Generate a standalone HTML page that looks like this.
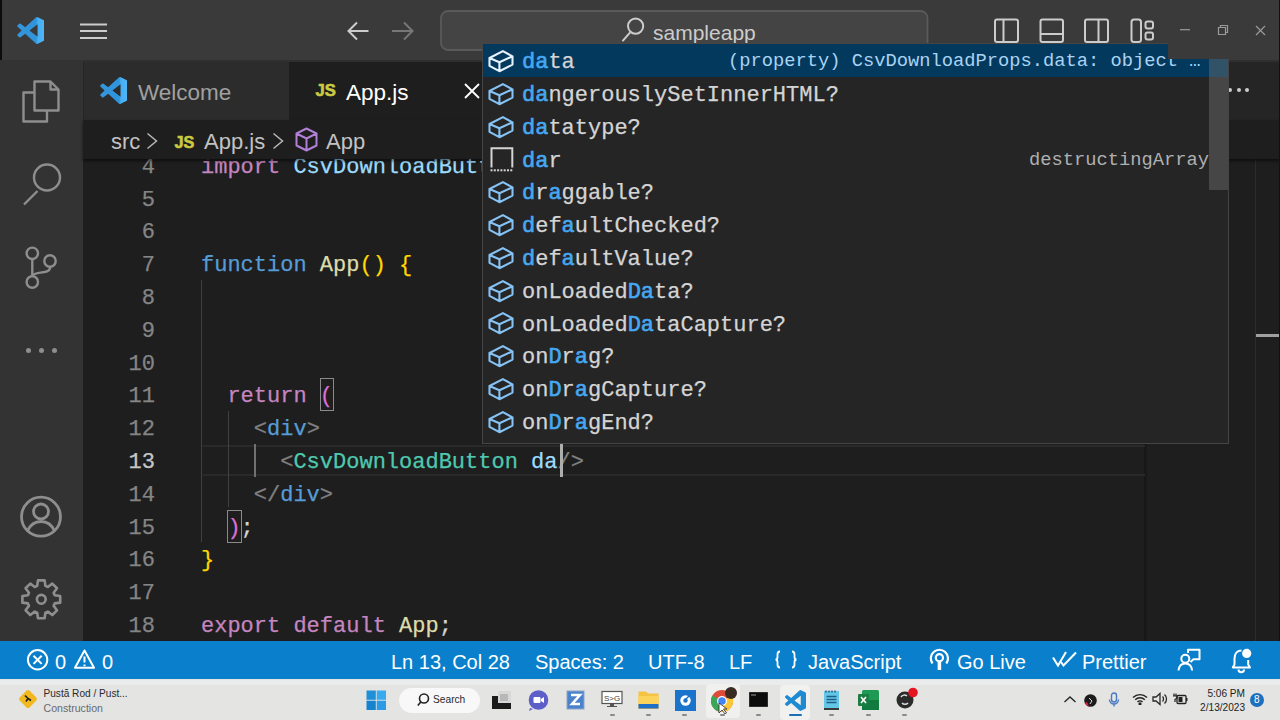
<!DOCTYPE html>
<html><head><meta charset="utf-8">
<style>
*{margin:0;padding:0;box-sizing:border-box}
html,body{width:1280px;height:720px;overflow:hidden;background:#1e1e1e;font-family:"Liberation Sans",sans-serif}
.abs{position:absolute}
#title{left:0;top:0;width:1280px;height:60px;background:#3a3a3a}
#act{left:0;top:60px;width:83px;height:581px;background:#333333}
#tabs{left:83px;top:60px;width:1197px;height:60px;background:#252526}
#tabW{left:84px;top:62px;width:205px;height:58px;background:#2c2c2c}
#tabA{left:289px;top:62px;width:211px;height:58px;background:#1e1e1e}
#crumb{left:83px;top:120px;width:1197px;height:39px;background:#1e1e1e;box-shadow:0 2px 3px rgba(0,0,0,.55)}
#status{left:0;top:641px;width:1280px;height:38.7px;background:#0a80cc;color:#fff}
#task{left:0;top:679px;width:1280px;height:41px;background:#e4e4e2}
.mono{font-family:"Liberation Mono",monospace;font-size:22px;white-space:pre;-webkit-text-stroke:0.25px currentColor}
.ln{position:absolute;left:83px;width:72px;text-align:right;color:#858585;height:33px;line-height:33px}
.ln.act{color:#c6c6c6}
.code{position:absolute;left:201px;color:#d4d4d4;height:33px;line-height:33px}
.ui{position:absolute;font-family:"Liberation Sans",sans-serif;white-space:pre}
#sug{left:482px;top:43px;width:747px;height:401px;background:#252526;border:1px solid #454545}
.row{position:absolute;left:483px;width:745px;height:33px;line-height:33px}
.row.sel{background:#04395e}
.row .t{position:absolute;left:39px;top:2.3px;color:#d4d4d4;line-height:33px}
.hl{color:#45a8f2;font-weight:normal;-webkit-text-stroke:0.6px #45a8f2}
.row svg{position:absolute;left:1px;top:0}
.st{top:643px;line-height:38px;font-size:20px;color:#ffffff}
.tind{top:713.5px;width:5px;height:2.5px;border-radius:2px;background:#8a8a8a}
.det{position:absolute;font-family:"Liberation Mono",monospace;font-size:18.75px;color:#b0b0b0;white-space:pre;line-height:33px}
</style></head><body>
<svg width="0" height="0" style="position:absolute"><defs><linearGradient id="vsg" x1="0" y1="0" x2="1" y2="0"><stop offset="0" stop-color="#3596dc"/><stop offset="0.7" stop-color="#2f94dc"/><stop offset="0.76" stop-color="#45aef2"/><stop offset="1" stop-color="#50b6f8"/></linearGradient></defs></svg>
<div id="title" class="abs"></div>
<div class="abs" style="left:0;top:0;width:1.5px;height:720px;background:#0c0c0c"></div>

<svg class="abs" style="left:0;top:0" width="1280" height="60" fill="none" stroke="#cccccc" stroke-width="2">
 <path d="M80 24.5H107M80 31H107M80 38H107" stroke-width="2"/>
 <path d="M368.5 31H348.5M357 22.5L348.5 31L357 39.5" stroke-width="2"/>
 <path d="M392 31H412.5M404 22.5L412.5 31L404 39.5" stroke="#777777" stroke-width="2"/>
 <rect x="441" y="11" width="486.5" height="39" rx="7" fill="#444444" stroke="#5a5a5a" stroke-width="1.8"/>
 <circle cx="635.6" cy="26.1" r="7.6" stroke-width="2"/>
 <path d="M622.5 41.1L630.2 32.4" stroke-width="2"/>
 <rect x="995" y="19.5" width="23" height="22.5" rx="2"/>
 <path d="M1003.5 19.5V42"/>
 <rect x="1040.5" y="19.5" width="22.5" height="22.5" rx="2"/>
 <path d="M1040.5 34H1063"/>
 <rect x="1085" y="19.5" width="23" height="22.5" rx="2"/>
 <path d="M1098.5 19.5V42"/>
 <rect x="1131.5" y="19.5" width="9.5" height="22.5" rx="2.5"/>
 <rect x="1145.5" y="21.5" width="7.5" height="7" rx="2"/>
 <rect x="1145.5" y="32.5" width="7.5" height="7" rx="2"/>
</svg>
<div class="ui" style="left:653px;top:15.5px;line-height:34px;font-size:21px;color:#cccccc">sampleapp</div>

<div id="act" class="abs"></div>

<svg class="abs" style="left:0;top:60px" width="83" height="581" viewBox="0 60 83 581" fill="none" stroke="#8e8e8e" stroke-width="2.4" stroke-linejoin="round">
 <path d="M34 92.5H23.5V121.5H47V111"/>
 <path d="M34.5 81.5H50.5L58.5 89.5V110.5H34.5Z M50.5 81.5V89.5H58.5"/>
 <circle cx="47" cy="177.5" r="13"/>
 <path d="M24 204.5L37.5 191"/>
 <circle cx="32.3" cy="253.3" r="5.7"/>
 <circle cx="50" cy="261" r="5.7"/>
 <circle cx="32.3" cy="282" r="5.7"/>
 <path d="M32.3 259V276.3 M50.2 266.8C50.2 271.3 46.5 271.8 40.5 272.6C35.5 273.3 32.3 274.8 32.3 276.8"/>
 <circle cx="41" cy="516.7" r="19.5" stroke-width="2.8"/>
 <circle cx="41" cy="511.5" r="7.5" stroke-width="2.8"/>
 <path d="M27.5 531C31 523 36 521.5 41 521.5C46 521.5 51 523 54.5 531" stroke-width="2.8"/>
 <g transform="translate(41.3 599.3)">
  <path d="M-4.09 -13.39 L-3.33 -18.91 L3.33 -18.91 L4.09 -13.39 L6.57 -12.36 L11.01 -15.73 L15.73 -11.01 L12.36 -6.57 L13.39 -4.09 L18.91 -3.33 L18.91 3.33 L13.39 4.09 L12.36 6.57 L15.73 11.01 L11.01 15.73 L6.57 12.36 L4.09 13.39 L3.33 18.91 L-3.33 18.91 L-4.09 13.39 L-6.57 12.36 L-11.01 15.73 L-15.73 11.01 L-12.36 6.57 L-13.39 4.09 L-18.91 3.33 L-18.91 -3.33 L-13.39 -4.09 L-12.36 -6.57 L-15.73 -11.01 L-11.01 -15.73 L-6.57 -12.36 Z" stroke-width="2.6"/>
  <circle cx="0" cy="0" r="4.4" stroke-width="2.6"/>
 </g>
</svg>
<div class="abs" style="left:25.5px;top:347.9px;width:5px;height:5px;border-radius:50%;background:#8e8e8e"></div>
<div class="abs" style="left:38.5px;top:347.9px;width:5px;height:5px;border-radius:50%;background:#8e8e8e"></div>
<div class="abs" style="left:51.5px;top:347.9px;width:5px;height:5px;border-radius:50%;background:#8e8e8e"></div>

<div id="tabs" class="abs"></div>
<div class="abs" style="left:83px;top:60px;width:1197px;height:2px;background:#2f2f2f"></div>
<div id="tabW" class="abs"></div>
<div id="tabA" class="abs"></div>
<!-- editor -->
<div class="abs" style="left:1145px;top:159px;width:135px;height:482px;background:#1e1e1e"></div>
<div class="abs" style="left:1144px;top:159px;width:3px;height:482px;background:linear-gradient(90deg,#161616,#1a1a1a)"></div>
<div class="abs" style="left:1255px;top:159px;width:1px;height:482px;background:#2c2c2c"></div>
<div class="abs" style="left:1256px;top:334px;width:24px;height:3px;background:#a0a0a0"></div>
<div class="abs" style="left:203px;top:445px;width:942px;height:30.7px;border-top:2px solid #2a2a2a;border-bottom:2px solid #2a2a2a"></div>
<div class="abs" style="left:201px;top:280px;width:1px;height:262px;background:#404040"></div>
<div class="abs" style="left:227.5px;top:411px;width:1px;height:96px;background:#404040"></div>
<div class="abs" style="left:254px;top:444px;width:2px;height:32.5px;background:#707070"></div>
<div class="abs" style="left:319.8px;top:378px;width:14.4px;height:33.4px;border:1.3px solid #8a8a8a"></div>
<div class="abs" style="left:227.3px;top:509.8px;width:14.4px;height:33.4px;border:1.3px solid #8a8a8a"></div>
<div class="mono ln" style="top:150.7px">4</div>
<div class="mono code" style="top:150.7px"><span style="color:#c586c0">import</span> <span style="color:#9cdcfe">CsvDownloadButton</span> <span style="color:#c586c0">from</span> <span style="color:#ce9178">'react-csv-downloader'</span>;</div>
<div class="mono ln" style="top:183.5px">5</div>
<div class="mono ln" style="top:216.3px">6</div>
<div class="mono ln" style="top:249.1px">7</div>
<div class="mono code" style="top:249.1px"><span style="color:#569cd6">function</span> <span style="color:#dcdcaa">App</span><span style="color:#ffd700">()</span> <span style="color:#ffd700">{</span></div>
<div class="mono ln" style="top:281.9px">8</div>
<div class="mono ln" style="top:314.7px">9</div>
<div class="mono ln" style="top:347.5px">10</div>
<div class="mono ln" style="top:380.3px">11</div>
<div class="mono code" style="top:380.3px">  <span style="color:#c586c0">return</span> <span style="color:#da70d6">(</span></div>
<div class="mono ln" style="top:413.1px">12</div>
<div class="mono code" style="top:413.1px">    <span style="color:#808080">&lt;</span><span style="color:#569cd6">div</span><span style="color:#808080">&gt;</span></div>
<div class="mono ln act" style="top:445.9px">13</div>
<div class="mono code" style="top:445.9px">      <span style="color:#808080">&lt;</span><span style="color:#4ec9b0">CsvDownloadButton</span> <span style="color:#9cdcfe">da</span><span style="color:#808080">/&gt;</span></div>
<div class="mono ln" style="top:478.7px">14</div>
<div class="mono code" style="top:478.7px">    <span style="color:#808080">&lt;/</span><span style="color:#569cd6">div</span><span style="color:#808080">&gt;</span></div>
<div class="mono ln" style="top:511.5px">15</div>
<div class="mono code" style="top:511.5px">  <span style="color:#da70d6">)</span>;</div>
<div class="mono ln" style="top:544.3px">16</div>
<div class="mono code" style="top:544.3px"><span style="color:#ffd700">}</span></div>
<div class="mono ln" style="top:577.1px">17</div>
<div class="mono ln" style="top:609.9px">18</div>
<div class="mono code" style="top:609.9px"><span style="color:#c586c0">export</span> <span style="color:#c586c0">default</span> <span style="color:#dcdcaa">App</span>;</div>
<div class="abs" style="left:560px;top:444px;width:3px;height:32.6px;background:#aeafad"></div>
<div id="crumb" class="abs"></div>
<div class="ui" style="left:111px;top:122px;line-height:39px;font-size:22px;color:#c2c2c2">src</div>
<svg class="abs" style="left:146px;top:132px" width="14" height="18" fill="none" stroke="#b8b8b8" stroke-width="1.5"><path d="M1.5 1.5L10.5 9L1.5 16.5"/></svg>
<div class="ui" style="left:174.5px;top:133.5px;line-height:16px;font-size:16.2px;font-weight:bold;color:#cbcb41;-webkit-text-stroke:0.6px #cbcb41">JS</div>
<div class="ui" style="left:204px;top:122px;line-height:39px;font-size:22px;color:#c2c2c2">App.js</div>
<svg class="abs" style="left:272px;top:132px" width="14" height="18" fill="none" stroke="#b8b8b8" stroke-width="1.5"><path d="M1.5 1.5L10.5 9L1.5 16.5"/></svg>
<svg class="abs" style="left:294px;top:126px" width="26" height="27" fill="none" stroke="#b180d7" stroke-width="2" stroke-linejoin="round"><path d="M12.5 2.5L22.5 7.5V19.5L12.5 24.5L2.5 19.5V7.5Z M2.5 7.5L12.5 12.5L22.5 7.5 M12.5 12.5V24.5"/></svg>
<div class="ui" style="left:326px;top:122px;line-height:39px;font-size:22px;color:#c2c2c2">App</div>
<svg class="abs" style="left:99.8px;top:76.7px" width="27.5" height="27" viewBox="0 0 24 24" fill="url(#vsg)"><path d="M23.15 2.587L18.21.21a1.494 1.494 0 0 0-1.705.29l-9.46 8.63-4.12-3.128a.999.999 0 0 0-1.276.057L.327 7.261A1 1 0 0 0 .326 8.74L3.899 12 .326 15.26a1 1 0 0 0 .001 1.479L1.65 17.94a.999.999 0 0 0 1.276.057l4.12-3.128 9.46 8.63a1.492 1.492 0 0 0 1.704.29l4.942-2.377A1.5 1.5 0 0 0 24 20.06V3.939a1.5 1.5 0 0 0-.85-1.352zm-5.146 14.861L10.826 12l7.178-5.448v10.896z"/></svg>
<div class="ui" style="left:138px;top:64px;line-height:58px;font-size:22.5px;color:#a0a0a0">Welcome</div>
<div class="ui" style="left:315.5px;top:83.3px;line-height:16px;font-size:16.6px;font-weight:bold;color:#cbcb41;-webkit-text-stroke:0.6px #cbcb41">JS</div>
<div class="ui" style="left:346px;top:64px;line-height:58px;font-size:22.5px;color:#ffffff">App.js</div>
<svg class="abs" style="left:462px;top:81px" width="20" height="20" fill="none" stroke="#ffffff" stroke-width="1.8"><path d="M3 3L17 17M17 3L3 17"/></svg>
<div class="abs" style="left:1228.2px;top:88.4px;width:4px;height:4px;background:#cccccc;border-radius:50%"></div>
<div class="abs" style="left:1236.9px;top:88.4px;width:4px;height:4px;background:#cccccc;border-radius:50%"></div>
<div class="abs" style="left:1245.4px;top:88.4px;width:4px;height:4px;background:#cccccc;border-radius:50%"></div>
<svg class="abs" style="left:16.6px;top:16.8px" width="27.6" height="27" viewBox="0 0 24 24" fill="url(#vsg)"><path d="M23.15 2.587L18.21.21a1.494 1.494 0 0 0-1.705.29l-9.46 8.63-4.12-3.128a.999.999 0 0 0-1.276.057L.327 7.261A1 1 0 0 0 .326 8.74L3.899 12 .326 15.26a1 1 0 0 0 .001 1.479L1.65 17.94a.999.999 0 0 0 1.276.057l4.12-3.128 9.46 8.63a1.492 1.492 0 0 0 1.704.29l4.942-2.377A1.5 1.5 0 0 0 24 20.06V3.939a1.5 1.5 0 0 0-.85-1.352zm-5.146 14.861L10.826 12l7.178-5.448v10.896z"/></svg>
<!-- suggest -->
<div id="sug" class="abs"></div>
<div class="row sel" style="top:44.0px"><svg width="34" height="33" viewBox="0 0 34 33"><path d="M18.9 7.1 L5.5 14 L15.4 18.2 L28.5 12.3 Z M5.5 14 L5.5 21.8 L15.4 27.2 L28.5 20.6 L28.5 12.3 M15.4 18.2 L15.4 27.2" fill="none" stroke="#e6f3ff" stroke-width="2.1" stroke-linejoin="round"/></svg><span class="mono t"><b class="hl">da</b>ta</span></div>
<div class="row" style="top:76.8px"><svg width="34" height="33" viewBox="0 0 34 33"><path d="M18.9 7.1 L5.5 14 L15.4 18.2 L28.5 12.3 Z M5.5 14 L5.5 21.8 L15.4 27.2 L28.5 20.6 L28.5 12.3 M15.4 18.2 L15.4 27.2" fill="none" stroke="#86c3f4" stroke-width="2.1" stroke-linejoin="round"/></svg><span class="mono t"><b class="hl">da</b>ngerouslySetInnerHTML?</span></div>
<div class="row" style="top:109.6px"><svg width="34" height="33" viewBox="0 0 34 33"><path d="M18.9 7.1 L5.5 14 L15.4 18.2 L28.5 12.3 Z M5.5 14 L5.5 21.8 L15.4 27.2 L28.5 20.6 L28.5 12.3 M15.4 18.2 L15.4 27.2" fill="none" stroke="#86c3f4" stroke-width="2.1" stroke-linejoin="round"/></svg><span class="mono t"><b class="hl">da</b>tatype?</span></div>
<div class="row" style="top:142.4px"><svg width="34" height="33" viewBox="0 0 34 33"><path d="M7.5 25.6 V6.2 H28.3 V25.6" fill="none" stroke="#d4d4d4" stroke-width="2"/><g fill="#d4d4d4"><rect x="6.5" y="27.3" width="2" height="2"/><rect x="9.8" y="27.3" width="2" height="2"/><rect x="13.1" y="27.3" width="2" height="2"/><rect x="16.4" y="27.3" width="2" height="2"/><rect x="19.7" y="27.3" width="2" height="2"/><rect x="23.0" y="27.3" width="2" height="2"/><rect x="26.3" y="27.3" width="2" height="2"/></g></svg><span class="mono t"><b class="hl">da</b>r</span></div>
<div class="row" style="top:175.2px"><svg width="34" height="33" viewBox="0 0 34 33"><path d="M18.9 7.1 L5.5 14 L15.4 18.2 L28.5 12.3 Z M5.5 14 L5.5 21.8 L15.4 27.2 L28.5 20.6 L28.5 12.3 M15.4 18.2 L15.4 27.2" fill="none" stroke="#86c3f4" stroke-width="2.1" stroke-linejoin="round"/></svg><span class="mono t"><b class="hl">d</b>r<b class="hl">a</b>ggable?</span></div>
<div class="row" style="top:208.0px"><svg width="34" height="33" viewBox="0 0 34 33"><path d="M18.9 7.1 L5.5 14 L15.4 18.2 L28.5 12.3 Z M5.5 14 L5.5 21.8 L15.4 27.2 L28.5 20.6 L28.5 12.3 M15.4 18.2 L15.4 27.2" fill="none" stroke="#86c3f4" stroke-width="2.1" stroke-linejoin="round"/></svg><span class="mono t"><b class="hl">d</b>ef<b class="hl">a</b>ultChecked?</span></div>
<div class="row" style="top:240.8px"><svg width="34" height="33" viewBox="0 0 34 33"><path d="M18.9 7.1 L5.5 14 L15.4 18.2 L28.5 12.3 Z M5.5 14 L5.5 21.8 L15.4 27.2 L28.5 20.6 L28.5 12.3 M15.4 18.2 L15.4 27.2" fill="none" stroke="#86c3f4" stroke-width="2.1" stroke-linejoin="round"/></svg><span class="mono t"><b class="hl">d</b>ef<b class="hl">a</b>ultValue?</span></div>
<div class="row" style="top:273.6px"><svg width="34" height="33" viewBox="0 0 34 33"><path d="M18.9 7.1 L5.5 14 L15.4 18.2 L28.5 12.3 Z M5.5 14 L5.5 21.8 L15.4 27.2 L28.5 20.6 L28.5 12.3 M15.4 18.2 L15.4 27.2" fill="none" stroke="#86c3f4" stroke-width="2.1" stroke-linejoin="round"/></svg><span class="mono t">onLoaded<b class="hl">Da</b>ta?</span></div>
<div class="row" style="top:306.4px"><svg width="34" height="33" viewBox="0 0 34 33"><path d="M18.9 7.1 L5.5 14 L15.4 18.2 L28.5 12.3 Z M5.5 14 L5.5 21.8 L15.4 27.2 L28.5 20.6 L28.5 12.3 M15.4 18.2 L15.4 27.2" fill="none" stroke="#86c3f4" stroke-width="2.1" stroke-linejoin="round"/></svg><span class="mono t">onLoaded<b class="hl">Da</b>taCapture?</span></div>
<div class="row" style="top:339.2px"><svg width="34" height="33" viewBox="0 0 34 33"><path d="M18.9 7.1 L5.5 14 L15.4 18.2 L28.5 12.3 Z M5.5 14 L5.5 21.8 L15.4 27.2 L28.5 20.6 L28.5 12.3 M15.4 18.2 L15.4 27.2" fill="none" stroke="#86c3f4" stroke-width="2.1" stroke-linejoin="round"/></svg><span class="mono t">on<b class="hl">D</b>r<b class="hl">a</b>g?</span></div>
<div class="row" style="top:372.0px"><svg width="34" height="33" viewBox="0 0 34 33"><path d="M18.9 7.1 L5.5 14 L15.4 18.2 L28.5 12.3 Z M5.5 14 L5.5 21.8 L15.4 27.2 L28.5 20.6 L28.5 12.3 M15.4 18.2 L15.4 27.2" fill="none" stroke="#86c3f4" stroke-width="2.1" stroke-linejoin="round"/></svg><span class="mono t">on<b class="hl">D</b>r<b class="hl">a</b>gCapture?</span></div>
<div class="row" style="top:404.8px"><svg width="34" height="33" viewBox="0 0 34 33"><path d="M18.9 7.1 L5.5 14 L15.4 18.2 L28.5 12.3 Z M5.5 14 L5.5 21.8 L15.4 27.2 L28.5 20.6 L28.5 12.3 M15.4 18.2 L15.4 27.2" fill="none" stroke="#86c3f4" stroke-width="2.1" stroke-linejoin="round"/></svg><span class="mono t">on<b class="hl">D</b>r<b class="hl">a</b>gEnd?</span></div>
<div class="det" style="left:728px;top:45px;color:#a9d3f2">(property) CsvDownloadProps.data: object …</div>
<div class="det" style="left:1029px;top:144.2px">destructingArray</div>
<div class="abs" style="left:1209px;top:44px;width:19px;height:146px;background:rgba(121,121,121,0.4)"></div>
<div class="abs" style="left:1168px;top:0;width:112px;height:59px;background:#3a3a3a"></div>
<svg class="abs" style="left:1168px;top:0" width="112" height="58" viewBox="1168 0 112 58" fill="none">
 <path d="M1180 29.7H1190" stroke="#9a9a9a" stroke-width="1.2"/>
 <path d="M1218.5 27.5h7v7h-7z M1220.5 27.5v-2h7v7h-2" stroke="#9a9a9a" stroke-width="1.2"/>
 <path d="M1256 26L1265 35M1265 26L1256 35" stroke="#9a9a9a" stroke-width="1.2"/>
</svg>
<div class="abs" style="left:1278.5px;top:0;width:1.5px;height:679px;background:#111"></div>

<div id="status" class="abs"></div>
<svg class="abs" style="left:0;top:641px" width="1280" height="38" viewBox="0 641 1280 38" fill="none" stroke="#ffffff" stroke-width="2">
 <circle cx="37.6" cy="659.8" r="9.7"/>
 <path d="M33.5 655.7L41.7 663.9M41.7 655.7L33.5 663.9"/>
 <path d="M84.5 650.5L94 667.8H75Z" stroke-linejoin="round"/>
 <path d="M84.5 656.5V662.5M84.5 664.5V666.3"/>
 <path d="M780 651.5c-2 0-2.5 1-2.5 3v2.5c0 1.5-.8 2.5-2 2.5c1.2 0 2 1 2 2.5v2.5c0 2 .5 3 2.5 3" stroke-width="1.8"/>
 <path d="M792 651.5c2 0 2.5 1 2.5 3v2.5c0 1.5.8 2.5 2 2.5c-1.2 0-2 1-2 2.5v2.5c0 2-.5 3-2.5 3" stroke-width="1.8"/>
 <path d="M932.5 663.5A8.6 8.6 0 1 1 946.3 663.5" stroke-width="2.2"/>
 <circle cx="939.4" cy="657.8" r="3.6" stroke-width="2.2"/>
 <path d="M939.4 662V670" stroke-width="3.5"/>
 <path d="M1053 657.5L1058 665.5L1066 652M1061 662L1063.5 665.5L1076 652.5" stroke-width="2"/>
 <path d="M1188 653V649.8H1199.5V659.3H1193.5L1190.5 662" stroke-width="2" stroke-linejoin="round"/>
 <circle cx="1185.3" cy="658.8" r="4" stroke-width="2"/>
 <path d="M1178.5 670.5C1179 665.5 1182 663.5 1185.3 663.5C1188.6 663.5 1191.6 665.5 1192.1 670.5" stroke-width="2"/>
 <path d="M1241.5 650.5C1236.5 650.5 1234.5 654.5 1234.5 658.5V664.5L1232.8 667.5H1250L1248.2 664.5V660" stroke-width="2" stroke-linejoin="round"/>
 <path d="M1238.5 669.5A2.5 2.5 0 0 0 1244 669.5" stroke-width="2"/>
 <circle cx="1246.7" cy="653.4" r="4.6" fill="#ffffff" stroke="none"/>
</svg>
<div class="ui st" style="left:55px">0</div>
<div class="ui st" style="left:102px">0</div>
<div class="ui st" style="left:391px">Ln 13, Col 28</div>
<div class="ui st" style="left:535px">Spaces: 2</div>
<div class="ui st" style="left:648px">UTF-8</div>
<div class="ui st" style="left:729px">LF</div>
<div class="ui st" style="left:808px">JavaScript</div>
<div class="ui st" style="left:957px">Go Live</div>
<div class="ui st" style="left:1082px">Prettier</div>


<div id="task" class="abs"></div>
<div class="abs" style="left:0;top:679.7px;width:1280px;height:5px;background:#e9ebec"></div>
<svg class="abs" style="left:17px;top:688px" width="22" height="22" viewBox="0 0 22 22"><rect x="4" y="4" width="14" height="14" rx="2.5" transform="rotate(45 11 11)" fill="#f2b81f"/><path d="M8 7.5l3 3l-2 3M11 10.5l3 2" stroke="#222" stroke-width="1.6" fill="none"/></svg>
<div class="ui" style="left:43.5px;top:686.5px;font-size:10.1px;line-height:14px;color:#2a2a2a">Pustă Rod / Pust...</div>
<div class="ui" style="left:43.5px;top:700.5px;font-size:10.6px;line-height:14px;color:#6a6a6a">Construction</div>
<svg class="abs" style="left:366px;top:690px" width="21" height="21" viewBox="0 0 21 21"><rect x="0.5" y="0.5" width="9.3" height="9.3" fill="#1f8fd8"/><rect x="10.7" y="0.5" width="9.3" height="9.3" fill="#3aaaf0"/><rect x="0.5" y="10.7" width="9.3" height="9.3" fill="#1683cf"/><rect x="10.7" y="10.7" width="9.3" height="9.3" fill="#2a9be4"/></svg>
<div class="abs" style="left:398.5px;top:687.5px;width:81.5px;height:25px;border-radius:13px;background:#f8f8f8"></div>
<svg class="abs" style="left:416px;top:692px" width="14" height="16" viewBox="0 0 14 16" fill="none" stroke="#222" stroke-width="1.6"><circle cx="8" cy="6.5" r="4.5"/><path d="M1.8 13.5L4.8 10"/></svg>
<div class="ui" style="left:433px;top:692px;font-size:10.2px;line-height:15px;color:#2a2a2a">Search</div>
<svg class="abs" style="left:491px;top:690px" width="21" height="20" viewBox="0 0 21 20"><rect x="7" y="1" width="13" height="12" fill="#d8d8d8"/><rect x="9" y="4" width="8" height="7" fill="#b8b8b8"/><path d="M1 6H7V13H20V19H1Z" fill="#1c1c1c"/></svg>
<svg class="abs" style="left:528px;top:690px" width="21" height="21" viewBox="0 0 21 21"><circle cx="10.5" cy="10" r="9.8" fill="#5b5fc7"/><path d="M2 18L1 21L5 19Z" fill="#5b5fc7"/><rect x="5.5" y="7" width="7" height="6" rx="1" fill="#fff"/><path d="M13 9L16 7V13L13 11Z" fill="#fff"/></svg>
<svg class="abs" style="left:566px;top:690px" width="19" height="20" viewBox="0 0 19 20"><rect x="1" y="1" width="17" height="18" fill="#4a82cc" stroke="#8aa6c8" stroke-width="1"/><path d="M5 5H14L6 14H14" stroke="#fff" stroke-width="2.5" fill="none"/></svg>
<svg class="abs" style="left:601px;top:690px" width="22" height="18" viewBox="0 0 22 18"><rect x="1" y="1.5" width="20" height="12" fill="#fff" stroke="#555" stroke-width="1.2"/><path d="M9 14V16H6V17H16V16H13V14" fill="#555"/><text x="11" y="11" font-family="Liberation Sans" font-size="8" text-anchor="middle" fill="#444">S&gt;G</text></svg>
<svg class="abs" style="left:638px;top:690px" width="21" height="20" viewBox="0 0 21 20"><path d="M0.5 1.5H8L10 3.5H20.5V19H0.5Z" fill="#f5c242"/><rect x="0.5" y="6" width="20" height="9" fill="#fbd35a"/><rect x="0.5" y="14" width="20" height="4.5" fill="#1e6fc8"/></svg>
<svg class="abs" style="left:675px;top:689.5px" width="21" height="21" viewBox="0 0 21 21"><rect x="0" y="0" width="21" height="21" fill="#1b74cc"/><circle cx="10.5" cy="10.5" r="5.2" fill="#fff"/><circle cx="10.5" cy="10.5" r="2.2" fill="#1b74cc"/><path d="M10 10L14 6" stroke="#1b74cc" stroke-width="1.5"/></svg>
<div class="abs" style="left:706px;top:684px;width:34px;height:34px;border-radius:4px;background:#f0f0ee"></div>
<svg class="abs" style="left:710px;top:686px" width="28" height="28" viewBox="0 0 28 28"><circle cx="12" cy="15" r="11" fill="#dd4b39"/><path d="M12 15L2.5 9.5A11 11 0 0 0 9 25.6Z" fill="#3aa757"/><path d="M12 15L21.5 9.5A11 11 0 0 1 9 25.6Z" fill="#fcc934"/><circle cx="12" cy="15" r="5" fill="#fff"/><circle cx="12" cy="15" r="3.8" fill="#4285f4"/><circle cx="21" cy="7" r="6" fill="#3a2c22"/><path d="M9 17L9 27L12 24L15 28L16.5 27L13.5 23H17Z" fill="#fff" stroke="#222" stroke-width="0.8"/></svg>
<svg class="abs" style="left:749px;top:692px" width="19" height="15" viewBox="0 0 19 15"><rect x="0" y="0" width="19" height="15" fill="#0c0c0c" stroke="#777" stroke-width="0.6"/><path d="M2 3H7" stroke="#999" stroke-width="1"/></svg>
<div class="abs" style="left:780px;top:684.5px;width:30px;height:35px;border-radius:4px;background:#f1f1ef"></div>
<svg class="abs" style="left:785px;top:690px" width="21" height="21" viewBox="0 0 24 24" fill="#1f8ad2"><path d="M23.15 2.587L18.21.21a1.494 1.494 0 0 0-1.705.29l-9.46 8.63-4.12-3.128a.999.999 0 0 0-1.276.057L.327 7.261A1 1 0 0 0 .326 8.74L3.899 12 .326 15.26a1 1 0 0 0 .001 1.479L1.65 17.94a.999.999 0 0 0 1.276.057l4.12-3.128 9.46 8.63a1.492 1.492 0 0 0 1.704.29l4.942-2.377A1.5 1.5 0 0 0 24 20.06V3.939a1.5 1.5 0 0 0-.85-1.352zm-5.146 14.861L10.826 12l7.178-5.448v10.896z"/></svg>
<div class="abs" style="left:789px;top:713.5px;width:12.5px;height:2.8px;border-radius:2px;background:#1c6fb5"></div>
<svg class="abs" style="left:823px;top:689px" width="17" height="22" viewBox="0 0 17 22"><rect x="1" y="2" width="15" height="17" fill="#63c8e8"/><path d="M3 1.5V3.5M6 1.5V3.5M9 1.5V3.5M12 1.5V3.5" stroke="#1c4b6a" stroke-width="1.2"/><path d="M3.5 7.5H13.5M3.5 10.5H13.5M3.5 13.5H13.5" stroke="#1f5d86" stroke-width="1.3"/><rect x="1" y="19" width="15" height="2" fill="#3a3a3a"/></svg>
<svg class="abs" style="left:858px;top:690px" width="21" height="20" viewBox="0 0 21 20"><rect x="4" y="0" width="17" height="20" rx="1.5" fill="#1e9a54"/><rect x="4" y="10" width="17" height="10" fill="#117a3e"/><rect x="0" y="4" width="11" height="12" rx="1" fill="#1a7d43"/><path d="M3 7L8 13M8 7L3 13" stroke="#fff" stroke-width="1.6"/></svg>
<svg class="abs" style="left:895px;top:686px" width="24" height="24" viewBox="0 0 24 24"><circle cx="10" cy="14" r="8.5" fill="#2b2b2b"/><path d="M6 11a4 4 0 0 1 6 -1M13 17a4 4 0 0 1 -6 0" stroke="#ddd" stroke-width="1.5" fill="none"/><circle cx="18" cy="6.5" r="4.8" fill="#e5151f"/></svg>
<div class="abs tind" style="left:609.5px"></div>
<div class="abs tind" style="left:646px"></div>
<div class="abs tind" style="left:682px"></div>
<div class="abs tind" style="left:720px"></div>
<div class="abs tind" style="left:756px"></div>
<div class="abs tind" style="left:829px"></div>
<div class="abs tind" style="left:866px"></div>
<div class="abs tind" style="left:902px"></div>
<svg class="abs" style="left:1062px;top:694px" width="16" height="10" viewBox="0 0 16 10" fill="none" stroke="#2a2a2a" stroke-width="1.4"><path d="M2.5 8L8 3L13.5 8"/></svg>
<svg class="abs" style="left:1083px;top:693px" width="15" height="15" viewBox="0 0 15 15"><circle cx="7.5" cy="7.5" r="6.3" fill="#1c1c1c"/><path d="M2 10a6 6 0 0 0 4 3.5L4 9Z" fill="#e0203c"/><path d="M6 5L9 8L7 11" stroke="#ddd" stroke-width="1" fill="none"/></svg>
<svg class="abs" style="left:1108px;top:692px" width="12" height="16" viewBox="0 0 12 16" fill="none" stroke="#4a79c4" stroke-width="1.4"><rect x="3.5" y="1" width="5" height="9" rx="2.5"/><path d="M1.5 7.5a4.5 4.5 0 0 0 9 0M6 12V14.5"/></svg>
<svg class="abs" style="left:1132px;top:693px" width="16" height="12" viewBox="0 0 16 12" fill="none" stroke="#222" stroke-width="1.4"><path d="M1 4.5a10 10 0 0 1 14 0M3.2 6.8a6.6 6.6 0 0 1 9.6 0M5.5 9a3.3 3.3 0 0 1 5 0"/><circle cx="8" cy="10.8" r="0.9" fill="#222"/></svg>
<svg class="abs" style="left:1152px;top:692px" width="16" height="14" viewBox="0 0 16 14" fill="none" stroke="#2a2a2a" stroke-width="1.3"><path d="M1 5H4L8 1.5V12.5L4 9H1Z"/><path d="M10.5 4.5a3.5 3.5 0 0 1 0 5M12.5 2.5a6 6 0 0 1 0 9"/></svg>
<svg class="abs" style="left:1172px;top:693px" width="16" height="12" viewBox="0 0 16 12"><rect x="5" y="2.5" width="9" height="8" rx="1" fill="none" stroke="#222" stroke-width="1.3"/><rect x="14" y="5" width="1.5" height="3" fill="#222"/><rect x="6.5" y="4" width="4" height="5" fill="#222"/><path d="M2 0.5V3M4 0.5V3M1 3H5V5L3 6.5V9" stroke="#222" stroke-width="1.2" fill="none"/></svg>
<div class="ui" style="left:1161px;top:687px;width:84px;text-align:right;font-size:10.1px;line-height:14px;color:#1e1e1e">5:06 PM</div>
<div class="ui" style="left:1161px;top:700.5px;width:84px;text-align:right;font-size:10.1px;line-height:14px;color:#1e1e1e">2/13/2023</div>
<div class="abs" style="left:1249.7px;top:692.8px;width:14px;height:14px;border-radius:50%;background:#1f6fbf"></div>
<div class="ui" style="left:1249.7px;top:692.8px;width:14px;text-align:center;font-size:10px;line-height:14px;color:#fff">8</div>

</body></html>
